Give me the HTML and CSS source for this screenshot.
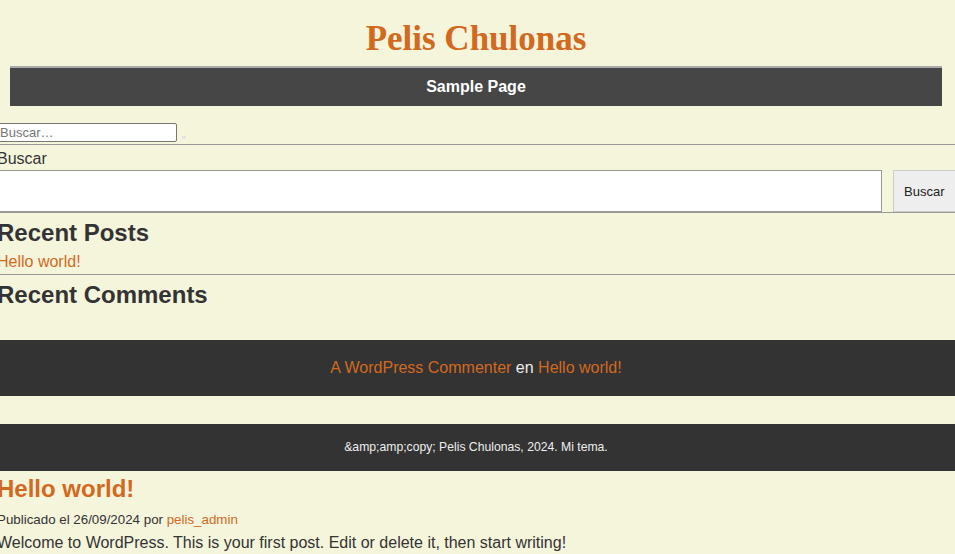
FILE: index.html
```html
<!DOCTYPE html>
<html lang="es">
<head>
<meta charset="utf-8">
<title>Pelis Chulonas</title>
<link rel="stylesheet" href="styles.css">
</head>
<body>
<header class="site-header">
  <h1 class="site-title">Pelis Chulonas</h1>
  <nav class="main-nav"><a class="nav-link" href="#">Sample Page</a></nav>
</header>
<div class="page">
  <section class="widget widget-search-small">
    <input class="search-small" type="search" placeholder="Buscar…">
    <span class="tiny-submit"></span>
  </section>
  <section class="widget widget-search">
    <label class="search-label">Buscar</label>
    <div class="search-row">
      <input class="search-big" type="search">
      <button class="search-btn" type="button">Buscar</button>
    </div>
  </section>
  <section class="widget widget-posts">
    <h2 class="widget-title">Recent Posts</h2>
    <a class="widget-link" href="#">Hello world!</a>
  </section>
  <section class="widget-comments">
    <h2 class="widget-title">Recent Comments</h2>
  </section>
  <div class="comment-band">
    <a class="orange" href="#">A WordPress Commenter</a> <span class="light">en</span> <a class="orange" href="#">Hello world!</a>
  </div>
  <footer class="site-footer">&amp;amp;amp;copy; Pelis Chulonas, 2024. Mi tema.</footer>
  <article class="post">
    <h2 class="post-title">Hello world!</h2>
    <p class="post-meta">Publicado el 26/09/2024 por <a class="orange" href="#">pelis_admin</a></p>
    <p class="post-body">Welcome to WordPress. This is your first post. Edit or delete it, then start writing!</p>
  </article>
</div>
</body>
</html>
```
FILE: styles.css
```css
html, body {
  margin: 0;
  padding: 0;
}
body {
  background: #f5f5dc;
  color: #333;
  font-family: "Liberation Sans", Arial, sans-serif;
  font-size: 16px;
  overflow: hidden;
}
a {
  text-decoration: none;
}
.orange {
  color: #d2691e;
}
.site-header {
  padding: 18px 13px 0 10px;
}
.site-title {
  margin: 0 0 6px;
  text-align: center;
  font-family: "Liberation Serif", "Times New Roman", serif;
  font-weight: bold;
  font-size: 35px;
  line-height: 42px;
  color: #d2691e;
}
.main-nav {
  border-top: 2px solid #aaa;
  background: #464646;
  padding: 10px 0;
  text-align: center;
  line-height: 18px;
}
.nav-link {
  color: #fff;
  font-weight: bold;
  font-size: 16px;
}
.page {
  margin-left: -3px;
}
.widget {
  border-bottom: 1px solid #999;
}
.widget-search-small {
  margin-top: 17px;
  display: flex;
  align-items: flex-start;
  gap: 5px;
  height: 21px;
}
.search-small {
  box-sizing: border-box;
  width: 180px;
  height: 19px;
  margin: 0;
  padding: 0 2px;
  border: 1px solid #767676;
  border-radius: 2px;
  background: #fff;
  font-family: "Liberation Sans", Arial, sans-serif;
  font-size: 13px;
  color: #333;
}
.search-small::placeholder {
  color: #757575;
}
.tiny-submit {
  width: 4px;
  height: 3px;
  margin-top: 13px;
  background: #e4e4e4;
}
.widget-search {
  padding-top: 5px;
}
.search-label {
  display: block;
  line-height: 18px;
  font-size: 16px;
  color: #333;
}
.search-row {
  margin-top: 2px;
  display: flex;
  gap: 11px;
}
.search-big {
  flex: 1;
  box-sizing: border-box;
  height: 42px;
  margin: 0;
  border: 1px solid #999;
  background: #fff;
}
.search-btn {
  box-sizing: border-box;
  width: 62px;
  height: 42px;
  margin: 0;
  padding: 0 10px;
  border: 1px solid #ccc;
  border-right: 0;
  background: #eee;
  color: #222;
  font-family: "Liberation Sans", Arial, sans-serif;
  font-size: 13px;
  text-align: left;
  white-space: nowrap;
}
.widget-title {
  margin: 6px 0 0;
  font-size: 24px;
  line-height: 28px;
  font-weight: bold;
  color: #333;
}
.widget-posts {
  padding-bottom: 3px;
}
.widget-link {
  display: block;
  margin-top: 6px;
  line-height: 18px;
  color: #d2691e;
}
.comment-band {
  margin-top: 31px;
  background: #333;
  padding: 19px 0;
  line-height: 18px;
  text-align: center;
  font-size: 16px;
}
.light {
  color: #eee;
}
.site-footer {
  margin-top: 28px;
  background: #333;
  padding: 16px 0;
  line-height: 15px;
  text-align: center;
  font-size: 12.2px;
  color: #eee;
}
.post-title {
  margin: 4px 0 0;
  font-size: 24px;
  line-height: 28px;
  font-weight: bold;
  color: #d2691e;
}
.post-meta {
  margin: 9px 0 0;
  font-size: 13.33px;
  line-height: 15px;
  color: #333;
}
.post-body {
  margin: 7px 0 0;
  font-size: 16px;
  line-height: 18px;
  color: #333;
}
```
